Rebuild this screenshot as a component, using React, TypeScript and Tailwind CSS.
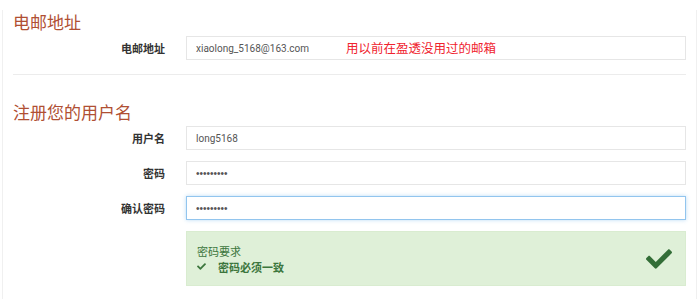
import { FaCheck } from 'react-icons/fa';

const cjk = '"Noto Sans CJK SC", "Noto Sans", sans-serif';
const latin = 'Roboto, "Noto Sans CJK SC", sans-serif';

function Row({ label, children }: { label: string; children: React.ReactNode }) {
  return (
    <div className="flex items-center">
      <div className="w-[173px] pr-[21px] text-right text-[11px] font-bold text-[#333]">{label}</div>
      <div className="flex-1">{children}</div>
    </div>
  );
}

const inputCls =
  'block w-full h-6 border border-[#e6e6e6] bg-white px-[9px] text-[10px] text-[#555] outline-none';

export default function App() {
  return (
    <div className="h-[299px] w-[700px] overflow-hidden bg-white" style={{ fontFamily: cjk }}>
      <div className="ml-[2px] h-full w-[695px] border-x border-[#f0f0f0] pl-[10px] pr-[10px]">
        <h2 className="mt-[10px] h-6 text-[17px] leading-6 text-[#b04f33]">电邮地址</h2>

        <div className="mt-[2px]">
          <Row label="电邮地址">
            <div className="relative">
              <input className={inputCls} defaultValue="xiaolong_5168@163.com" style={{ fontFamily: latin }} />
              <span className="absolute left-[160px] top-0 text-[12.5px] leading-6 text-[#f0232e]">
                用以前在盈透没用过的邮箱
              </span>
            </div>
          </Row>
        </div>

        <hr className="mt-[14px] border-t border-[#ececec]" />

        <h2 className="mt-[25px] h-6 text-[17px] leading-6 text-[#b04f33]">注册您的用户名</h2>

        <div className="mt-[2px] flex flex-col gap-[11px]">
          <Row label="用户名">
            <input className={inputCls} defaultValue="long5168" style={{ fontFamily: latin }} />
          </Row>
          <Row label="密码">
            <input
              type="password"
              className={inputCls}
              defaultValue="123456789"
              style={{ fontFamily: '"Liberation Sans", sans-serif' }}
            />
          </Row>
          <Row label="确认密码">
            <input
              type="password"
              className="block h-6 w-full border border-[#92c5ee] bg-white px-[9px] text-[10px] text-[#555] shadow-[0_0_4px_rgba(102,175,233,0.45)] outline-none"
              defaultValue="123456789"
              style={{ fontFamily: '"Liberation Sans", sans-serif' }}
            />
          </Row>
          <Row label="">
            <div className="flex h-[55px] items-center justify-between border border-[#d9ecd0] bg-[#dff0d8] pl-[10px] pr-[12px] text-[#3c763d]">
              <div className="flex flex-col">
                <span className="text-[11px] leading-4">密码要求</span>
                <span className="flex items-center text-[11px] font-bold leading-4">
                  <FaCheck className="mr-[12px] h-[9px] w-[9px]" />
                  密码必须一致
                </span>
              </div>
              <FaCheck className="h-[26px] w-[28px] text-[#336e37]" />
            </div>
          </Row>
        </div>
      </div>
    </div>
  );
}
